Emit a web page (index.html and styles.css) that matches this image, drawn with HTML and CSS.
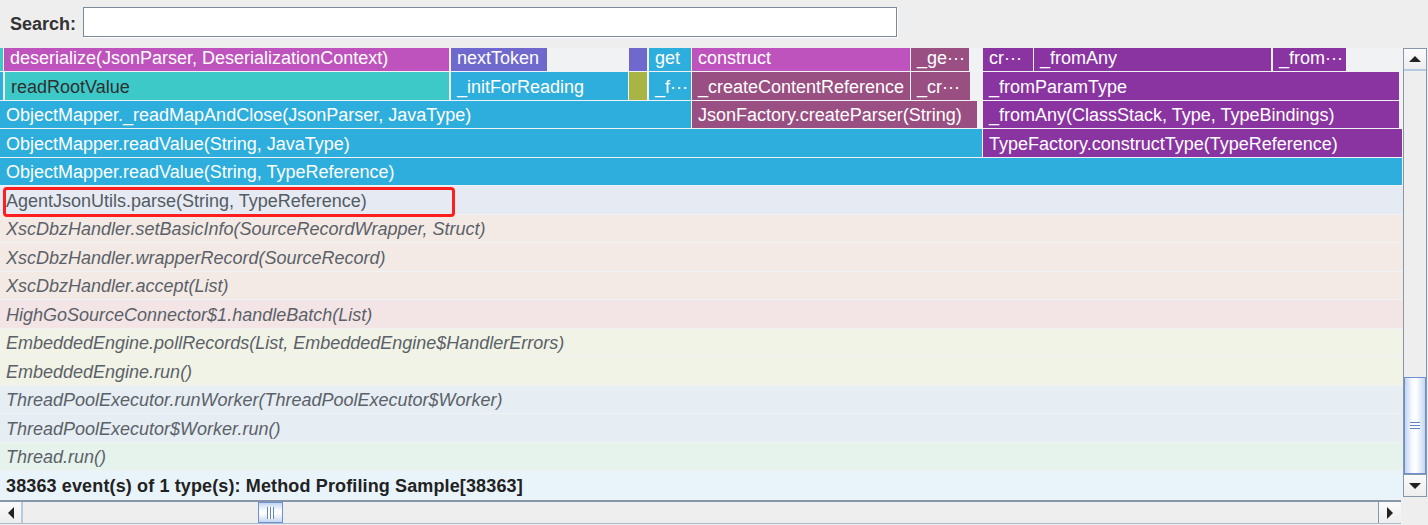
FILE: index.html
```html
<!DOCTYPE html>
<html>
<head>
<meta charset="utf-8">
<title>Flame graph</title>
<link rel="stylesheet" href="styles.css">
</head>
<body>
<div class="search-bar">
  <label class="search-label" for="q">Search:</label>
  <input class="search-input" id="q" type="text">
</div>
<div class="main">
  <div class="viewport">
    <div class="graph">
      <div class="row">
        <div class="frame empty c-teal" style="margin-left:0;width:3px"></div>
        <div class="frame c-magenta" style="margin-left:1px;width:445px">deserialize(JsonParser, DeserializationContext)</div>
        <div class="frame c-slate" style="margin-left:2px;width:96px">nextToken</div>
        <div class="frame empty c-slate" style="margin-left:82px;width:18px"></div>
        <div class="frame c-blue" style="margin-left:2px;width:42px">get</div>
        <div class="frame c-magenta" style="margin-left:1px;width:218px">construct</div>
        <div class="frame c-mauve" style="margin-left:1px;width:58px">_ge···</div>
        <div class="frame c-purple" style="margin-left:14px;width:50px">cr···</div>
        <div class="frame c-purple" style="margin-left:1px;width:237px">_fromAny</div>
        <div class="frame c-purple" style="margin-left:2px;width:73px">_from···</div>
      </div>
      <div class="row">
        <div class="frame empty c-blue" style="margin-left:0;width:3px"></div>
        <div class="frame c-teal" style="margin-left:2px;width:444px">readRootValue</div>
        <div class="frame c-blue" style="margin-left:2px;width:177px">_initForReading</div>
        <div class="frame empty c-olive" style="margin-left:1px;width:18px"></div>
        <div class="frame c-blue" style="margin-left:2px;width:42px">_f···</div>
        <div class="frame c-mauve" style="margin-left:1px;width:218px">_createContentReference</div>
        <div class="frame c-mauve" style="margin-left:1px;width:59px">_cr···</div>
        <div class="frame c-purple" style="margin-left:13px;width:416px">_fromParamType</div>
      </div>
      <div class="row">
        <div class="frame c-blue" style="margin-left:0;width:691px">ObjectMapper._readMapAndClose(JsonParser, JavaType)</div>
        <div class="frame c-mauve" style="margin-left:1px;width:285px">JsonFactory.createParser(String)</div>
        <div class="frame c-purple" style="margin-left:6px;width:416px">_fromAny(ClassStack, Type, TypeBindings)</div>
      </div>
      <div class="row">
        <div class="frame c-blue" style="margin-left:0;width:982px">ObjectMapper.readValue(String, JavaType)</div>
        <div class="frame c-purple" style="margin-left:1px;width:419px">TypeFactory.constructType(TypeReference)</div>
      </div>
      <div class="row">
        <div class="frame c-blue" style="margin-left:0;width:1402px">ObjectMapper.readValue(String, TypeReference)</div>
      </div>
      <div class="row">
        <div class="frame full c-agent">AgentJsonUtils.parse(String, TypeReference)</div>
        <div class="highlight"></div>
      </div>
      <div class="row">
        <div class="frame full dim c-peach">XscDbzHandler.setBasicInfo(SourceRecordWrapper, Struct)</div>
      </div>
      <div class="row">
        <div class="frame full dim c-peach">XscDbzHandler.wrapperRecord(SourceRecord)</div>
      </div>
      <div class="row">
        <div class="frame full dim c-peach">XscDbzHandler.accept(List)</div>
      </div>
      <div class="row">
        <div class="frame full dim c-pink">HighGoSourceConnector$1.handleBatch(List)</div>
      </div>
      <div class="row">
        <div class="frame full dim c-cream">EmbeddedEngine.pollRecords(List, EmbeddedEngine$HandlerErrors)</div>
      </div>
      <div class="row">
        <div class="frame full dim c-cream">EmbeddedEngine.run()</div>
      </div>
      <div class="row">
        <div class="frame full dim c-ice">ThreadPoolExecutor.runWorker(ThreadPoolExecutor$Worker)</div>
      </div>
      <div class="row">
        <div class="frame full dim c-ice">ThreadPoolExecutor$Worker.run()</div>
      </div>
      <div class="row">
        <div class="frame full dim c-mint">Thread.run()</div>
      </div>
      <div class="row">
        <div class="frame full status">38363 event(s) of 1 type(s): Method Profiling Sample[38363]</div>
      </div>
    </div>
  </div>

  <div class="vscroll">
    <div class="vbtn vbtn-up"><span class="tri tri-up"></span></div>
    <div class="vtrack">
      <div class="vthumb"><span class="grip-h"></span></div>
    </div>
    <div class="vbtn vbtn-down"><span class="tri tri-down"></span></div>
  </div>

  <div class="hscroll">
    <div class="hbtn hbtn-left"><span class="tri tri-left"></span></div>
    <div class="htrack">
      <div class="hthumb" style="margin-left:235px"><span class="grip-v"></span></div>
    </div>
    <div class="hbtn hbtn-right"><span class="tri tri-right"></span></div>
  </div>
  <div class="corner"></div>
</div>
</body>
</html>
```

FILE: styles.css
```css
* { box-sizing: border-box; }

html, body {
  margin: 0;
  padding: 0;
}

body {
  width: 1428px;
  height: 525px;
  overflow: hidden;
  background: #eeeeee;
  font-family: "Liberation Sans", Arial, sans-serif;
  color: #333;
}

/* ---------- search bar ---------- */
.search-bar {
  height: 48px;
  display: flex;
  align-items: flex-start;
  padding: 7px 0 0 10px;
}

.search-label {
  font-size: 18px;
  font-weight: bold;
  color: #333;
  line-height: 30px;
  padding-top: 2px;
  width: 73px;
}

.search-input {
  width: 814px;
  height: 30px;
  margin: 0;
  padding: 0 4px;
  border: 1px solid #7a8a9b;
  box-shadow: 1px 1px 0 #ffffff;
  background: #ffffff;
  font: 16px "Liberation Sans", Arial, sans-serif;
  outline: none;
}

/* ---------- main area ---------- */
.main {
  display: grid;
  grid-template-columns: 1403px 25px;
  grid-template-rows: 452px 25px;
}

.viewport {
  grid-column: 1;
  grid-row: 1;
  overflow: hidden;
  background: #f1f2f4;
}

.graph {
  display: flex;
  flex-direction: column;
  gap: 1px;
  margin-top: -4.5px;
}

.row {
  position: relative;
  height: 27.5px;
  display: flex;
  flex-shrink: 0;
}

.frame {
  height: 100%;
  flex-shrink: 0;
  display: flex;
  align-items: center;
  padding: 3px 0 0 6px;
  font-size: 18px;
  color: #ffffff;
  white-space: nowrap;
  overflow: hidden;
}

.frame.empty {
  padding: 0;
}

.frame.full {
  flex: 1 1 auto;
}

.frame.dim {
  font-style: italic;
  color: #5b6168;
}

.c-teal    { background: #3ec9c9; color: #2f2f2f; }
.c-magenta { background: #bf53bd; }
.c-slate   { background: #6f69cd; }
.c-blue    { background: #2eaedd; }
.c-mauve   { background: #9a4f83; }
.c-purple  { background: #8a34a2; }
.c-olive   { background: #a8b545; }

.c-agent { background: #e6eaf2; color: #555b62; }
.c-peach { background: #f3eae5; }
.c-pink  { background: #f3e5e5; }
.c-cream { background: #f1f3e7; }
.c-ice   { background: #e6edf3; }
.c-mint  { background: #e6f2ec; }

.status {
  background: #e9f4fa;
  color: #222222;
  font-weight: bold;
  letter-spacing: 0.13px;
}

.highlight {
  position: absolute;
  left: 3px;
  top: 1px;
  width: 452px;
  height: 30px;
  border: 3px solid #ff1f1f;
  border-radius: 4px;
  z-index: 2;
  pointer-events: none;
}

/* ---------- vertical scrollbar ---------- */
.vscroll {
  grid-column: 2;
  grid-row: 1;
  width: 24px;
  height: 449px;
  border: 1px solid #8797aa;
  background: #eeeeee;
  display: flex;
  flex-direction: column;
}

.vbtn {
  height: 22px;
  flex-shrink: 0;
  display: flex;
  align-items: center;
  justify-content: center;
  background: linear-gradient(#fbfbfb, #eeeeee);
}

.vbtn-up {
  border-bottom: 2px solid #b7cbe0;
}

.vbtn-down {
  border-top: 1px solid #8797aa;
}

.vtrack {
  flex: 1;
  display: flex;
  flex-direction: column;
  justify-content: flex-end;
  background: #eeeeee;
}

.vthumb {
  height: 97px;
  border: 1px solid #6f8fd3;
  background: linear-gradient(to right, #c3d6ef, #f7faff 35%, #ffffff 55%, #c4d7f0);
  display: flex;
  align-items: center;
  justify-content: center;
}

.grip-h {
  display: block;
  width: 10px;
  height: 7px;
  border-top: 1px solid #6184c9;
  border-bottom: 1px solid #6184c9;
  background: linear-gradient(#ffffff 0 2px, #6184c9 2px 3px, #ffffff 3px);
}

/* ---------- horizontal scrollbar ---------- */
.hscroll {
  grid-column: 1;
  grid-row: 2;
  width: 1401px;
  height: 24px;
  border-top: 2px solid #8797aa;
  border-bottom: 1px solid #a9bccf;
  background: #eeeeee;
  display: flex;
}

.hbtn {
  width: 23px;
  flex-shrink: 0;
  display: flex;
  align-items: center;
  justify-content: center;
  background: linear-gradient(#fbfbfb, #eeeeee);
}

.hbtn-left {
  border-right: 2px solid #b7cbe0;
}

.hbtn-right {
  border-left: 1px solid #8797aa;
}

.htrack {
  flex: 1;
  display: flex;
}

.hthumb {
  width: 25px;
  height: 100%;
  border: 1px solid #6f8fd3;
  background: linear-gradient(#c3d6ef, #f7faff 35%, #ffffff 55%, #c4d7f0);
  display: flex;
  align-items: center;
  justify-content: center;
}

.grip-v {
  display: block;
  width: 7px;
  height: 12px;
  border-left: 1px solid #6184c9;
  border-right: 1px solid #6184c9;
  background: linear-gradient(to right, #ffffff 0 2px, #6184c9 2px 3px, #ffffff 3px);
}

.corner {
  grid-column: 2;
  grid-row: 2;
  background: #eeeeee;
}

/* ---------- arrow triangles ---------- */
.tri {
  display: block;
  width: 0;
  height: 0;
}

.tri-up {
  border-left: 6px solid transparent;
  border-right: 6px solid transparent;
  border-bottom: 6px solid #222222;
}

.tri-down {
  border-left: 6px solid transparent;
  border-right: 6px solid transparent;
  border-top: 6px solid #222222;
}

.tri-left {
  border-top: 6px solid transparent;
  border-bottom: 6px solid transparent;
  border-right: 6px solid #222222;
}

.tri-right {
  border-top: 6px solid transparent;
  border-bottom: 6px solid transparent;
  border-left: 6px solid #222222;
}
```
